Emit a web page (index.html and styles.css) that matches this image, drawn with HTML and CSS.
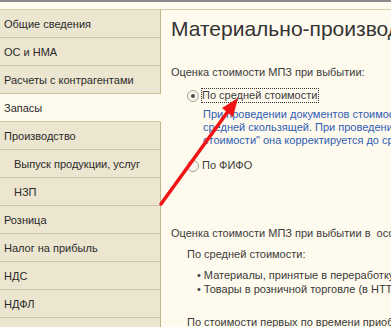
FILE: index.html
```html
<!DOCTYPE html>
<html lang="ru">
<head>
<meta charset="utf-8">
<title>Запасы</title>
<link rel="stylesheet" href="styles.css">
</head>
<body>
<div class="topbar"></div>
<div class="frame">
  <nav class="nav">
    <div class="nav-item">Общие сведения</div>
    <div class="nav-item">ОС и НМА</div>
    <div class="nav-item">Расчеты с контрагентами</div>
    <div class="nav-item active">Запасы</div>
    <div class="nav-item">Производство</div>
    <div class="nav-item sub">Выпуск продукции, услуг</div>
    <div class="nav-item sub">НЗП</div>
    <div class="nav-item">Розница</div>
    <div class="nav-item">Налог на прибыль</div>
    <div class="nav-item">НДС</div>
    <div class="nav-item">НДФЛ</div>
    <div class="nav-item">Страховые взносы</div>
  </nav>
  <main class="main">
    <h1 class="title">Материально-производственные запасы</h1>
    <div class="label">Оценка стоимости МПЗ при выбытии:</div>
    <div class="option">
      <span class="radio checked"></span>
      <span class="opt-text focused">По средней стоимости</span>
    </div>
    <div class="hint">
      <div>При проведении документов стоимость списания рассчитывается по</div>
      <div>средней скользящей. При проведении операции "Корректировка</div>
      <div>стоимости" она корректируется до средней за месяц.</div>
    </div>
    <div class="option option2">
      <span class="radio"></span>
      <span class="opt-text">По ФИФО</span>
    </div>
    <div class="label label2">Оценка стоимости МПЗ при выбытии в &nbsp;особых случаях:</div>
    <div class="subhead">По средней стоимости:</div>
    <ul class="bullets">
      <li>Материалы, принятые в переработку от заказчика</li>
      <li>Товары в розничной торговле (в НТТ)</li>
    </ul>
    <div class="subhead last">По стоимости первых по времени приобретения</div>
  </main>
</div>
<svg class="arrow" width="391" height="327" viewBox="0 0 391 327">
  <line x1="161" y1="204" x2="229" y2="110" stroke="#f21414" stroke-width="3.5" stroke-linecap="round"/>
  <polygon points="238,98 222,108 233,117" fill="#f21414"/>
</svg>
</body>
</html>
```
FILE: styles.css
```css
html, body {
  margin: 0;
  padding: 0;
}
body {
  width: 391px;
  height: 327px;
  overflow: hidden;
  background: #fffaee;
  font-family: "Liberation Sans", Arial, sans-serif;
  font-size: 11px;
  color: #333333;
  position: relative;
}
.topbar {
  height: 2px;
  background: #8a8a8a;
}
.frame {
  margin-top: 7px;
  display: flex;
  border-top: 1px solid #d3caa9;
}
.nav {
  flex: none;
  width: 161px;
}
.nav-item {
  height: 27px;
  box-sizing: content-box;
  display: flex;
  align-items: center;
  padding-left: 4px;
  background: #ece6d0;
  border-bottom: 1px solid #cdc4a3;
  border-right: 1px solid #bfb48c;
  white-space: nowrap;
  color: #2a2a2a;
}
.nav-item.sub {
  padding-left: 14px;
}
.nav-item.active {
  background: #fffaee;
  border-right-color: transparent;
}
.main {
  flex: 1;
  min-width: 0;
  height: 330px;
  padding-left: 10px;
  white-space: nowrap;
  overflow: hidden;
  color: #3a3a3a;
}
.title {
  margin: 7px 0 0 0;
  font-size: 21px;
  font-weight: normal;
  line-height: 24px;
  color: #333333;
}
.label {
  margin-top: 24px;
  line-height: 14px;
}
.option {
  display: flex;
  align-items: center;
  margin-top: 9px;
  padding-left: 16px;
  height: 15px;
}
.radio {
  flex: none;
  width: 10px;
  height: 10px;
  border: 1px solid #a9a58f;
  border-radius: 50%;
  background: #f7f5ee;
  position: relative;
  margin-right: 2px;
}
.radio.checked::after {
  content: "";
  position: absolute;
  left: 3px;
  top: 3px;
  width: 4px;
  height: 4px;
  border-radius: 50%;
  background: #4a4a4a;
}
.opt-text {
  line-height: 13px;
  padding: 0 1px 0 0;
  border: 1px dotted transparent;
}
.opt-text.focused {
  border-color: #333333;
}
.hint {
  margin-top: 5px;
  padding-left: 32px;
  color: #2e5db4;
  line-height: 13px;
}
.option2 {
  margin-top: 11px;
}
.label2 {
  margin-top: 53px;
}
.subhead {
  margin-top: 7px;
  padding-left: 16px;
  line-height: 14px;
}
.bullets {
  list-style: none;
  margin: 7px 0 0 0;
  padding: 0 0 0 26px;
}
.bullets li {
  line-height: 14px;
}
.bullets li::before {
  content: "\2022";
  margin-right: 3px;
}
.subhead.last {
  margin-top: 19px;
}
.arrow {
  position: absolute;
  left: 0;
  top: 0;
  pointer-events: none;
}
```
